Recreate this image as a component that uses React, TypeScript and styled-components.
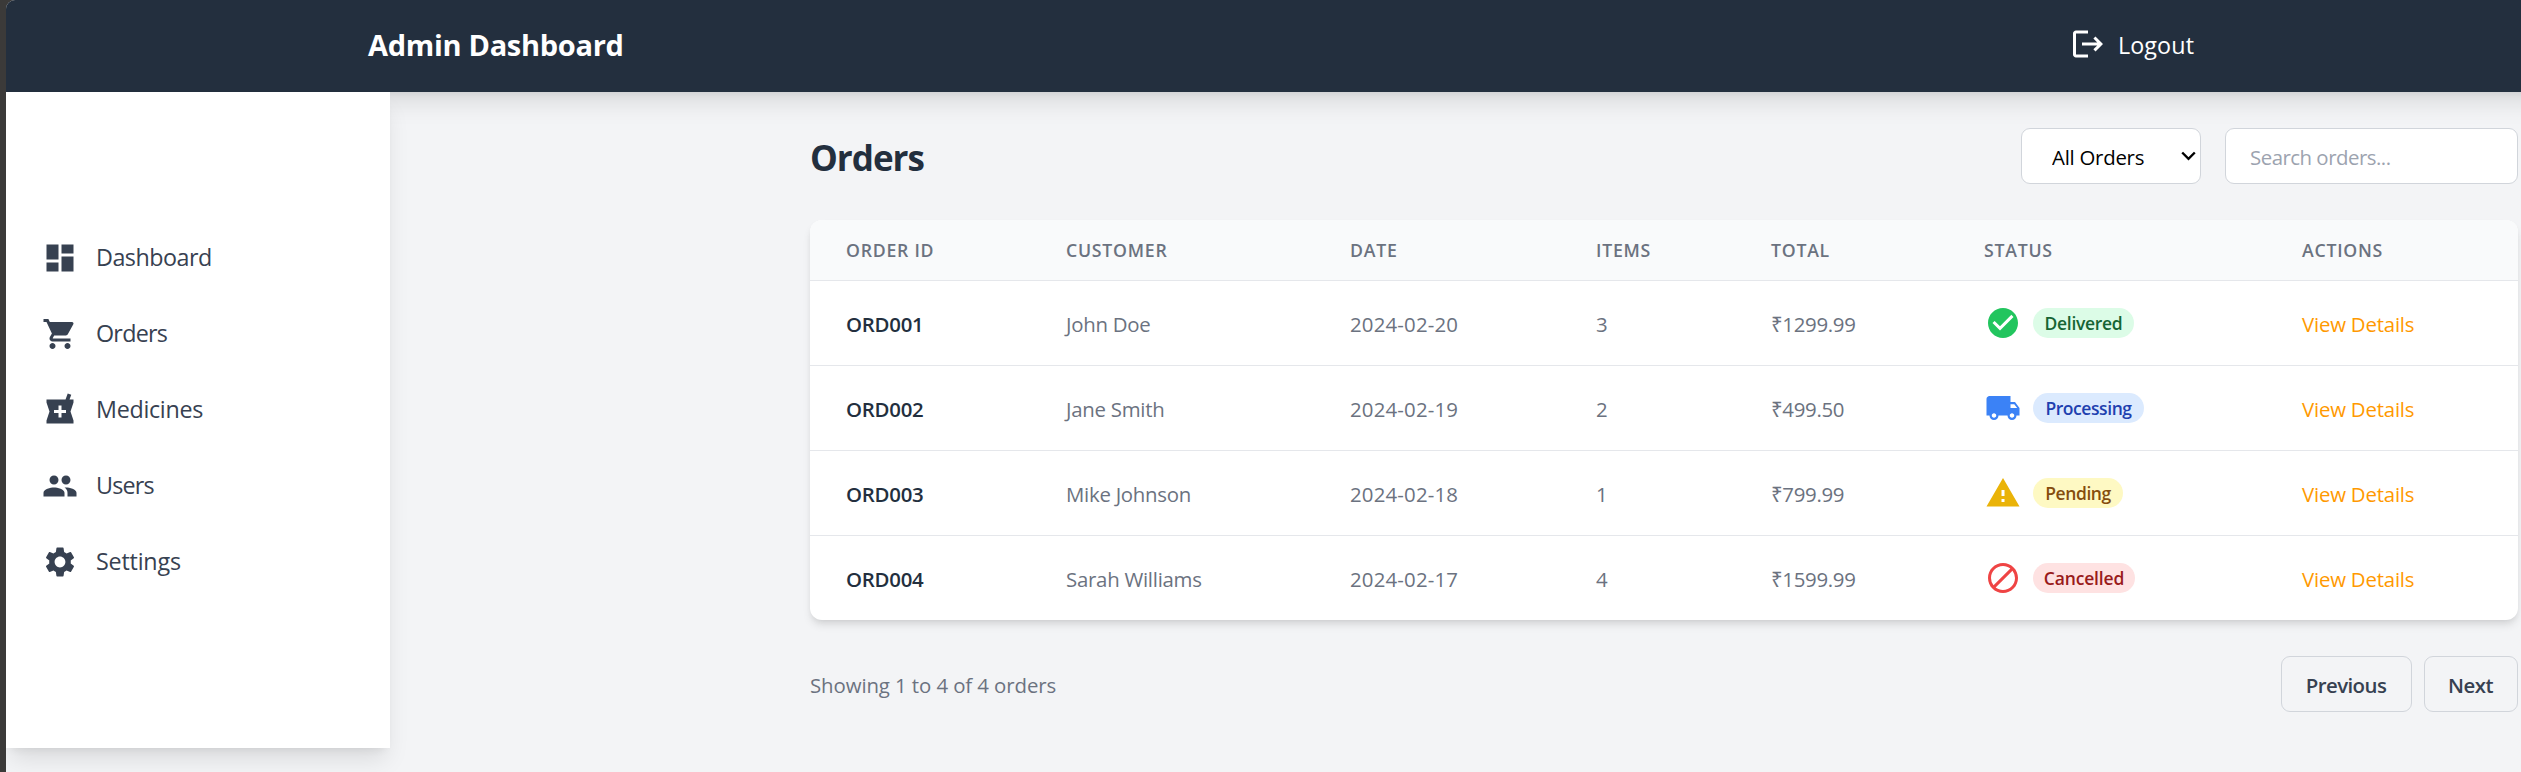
import React from 'react';
import styled, { createGlobalStyle } from 'styled-components';
import {
  MdBlock,
  MdCheckCircle,
  MdDashboard,
  MdLocalPharmacy,
  MdLocalShipping,
  MdLogout,
  MdPeople,
  MdSettings,
  MdShoppingCart,
  MdWarning,
} from 'react-icons/md';

const GlobalStyle = createGlobalStyle`
  *, *::before, *::after { box-sizing: border-box; }
  body {
    margin: 0;
    overflow: hidden;
    background: #3b3a39;
    font-family: 'Segoe UI', 'Open Sans', 'Noto Sans', sans-serif;
    font-size: 20.4px;
    color: #374151;
  }
  h1, h2 { margin: 0; }
  button, input, select { font: inherit; }
`;

const Window = styled.div`
  display: flex;
  flex-direction: column;
  height: 772px;
  margin-left: 6px;
  overflow: hidden;
  background: #f3f4f6;
  border-top-left-radius: 9px;
`;

const Header = styled.header`
  display: flex;
  align-items: center;
  flex: 0 0 92px;
  margin-right: -36px;
  padding: 0 0 4px 362px;
  background: #232f3e;
  color: #fff;
  box-shadow: 0 15px 22.5px -4.5px rgba(0, 0, 0, 0.1), 0 6px 9px -6px rgba(0, 0, 0, 0.1);
`;

const Brand = styled.h1`
  flex: 0 0 1702px;
  padding-top: 1px;
  font-size: 29px;
  line-height: 42px;
  letter-spacing: -0.3px;
`;

const LogoutButton = styled.button`
  display: flex;
  align-items: center;
  gap: 12px;
  padding: 0;
  border: 0;
  background: none;
  color: inherit;
  font-size: 23.3px;
  line-height: 36px;
  letter-spacing: 0.1px;
`;

const LogoutLabel = styled.span`
  padding-top: 2px;
`;

const Body = styled.div`
  display: flex;
  align-items: flex-start;
`;

const Sidebar = styled.nav`
  position: relative;
  flex: 0 0 384px;
  height: 656px;
  padding: 128px 36px 0;
  background: #fff;
  box-shadow: 0 15px 22.5px -4.5px rgba(0, 0, 0, 0.1), 0 6px 9px -6px rgba(0, 0, 0, 0.1);
`;

const NavItem = styled.a`
  display: flex;
  align-items: center;
  gap: 18px;
  height: 76px;
`;

const NavLabel = styled.span<{ $tracking: number }>`
  padding-bottom: 3px;
  font-size: 23.3px;
  line-height: 36px;
  letter-spacing: ${(p) => p.$tracking}px;
`;

const Main = styled.main`
  width: 1708px;
  margin-left: 420px;
  padding-top: 36px;
`;

const Toolbar = styled.div`
  display: flex;
  align-items: center;
  justify-content: space-between;
  height: 56px;
`;

const PageTitle = styled.h2`
  padding-top: 4px;
  color: #232f3e;
  font-size: 35px;
  line-height: 48px;
  letter-spacing: -1px;
`;

const Filters = styled.div`
  display: flex;
  gap: 24px;
`;

const SelectBox = styled.div`
  display: grid;
  align-items: center;
  width: 180px;
  height: 56px;
  > * { grid-area: 1 / 1; }
`;

const StatusSelect = styled.select`
  width: 100%;
  height: 100%;
  padding: 1px 30px 0;
  appearance: none;
  border: 1px solid #d1d5db;
  border-radius: 9px;
  background: #fff;
  color: #000;
  letter-spacing: -0.25px;
`;

const Chevron = styled.svg`
  justify-self: end;
  margin-right: 5px;
  pointer-events: none;
`;

const SearchInput = styled.input`
  width: 293px;
  height: 56px;
  padding: 1px 24px 0;
  border: 1px solid #d1d5db;
  border-radius: 9px;
  background: #fff;
  letter-spacing: -0.5px;
  &::placeholder { color: #9ca3af; opacity: 1; }
`;

const Card = styled.div`
  height: 400px;
  margin: 36px 0;
  overflow: hidden;
  border-radius: 12px;
  background: #fff;
  box-shadow: 0 6px 9px -1.5px rgba(0, 0, 0, 0.1), 0 3px 6px -3px rgba(0, 0, 0, 0.1);
`;

const Row = styled.div`
  display: grid;
  grid-template-columns: 220px 284px 246px 175px 213px 318px 252px;
  align-items: center;
  height: 85px;
  border-top: 1px solid #e5e7eb;
`;

const HeadRow = styled(Row)`
  height: 60px;
  border-top: 0;
  background: #f9fafb;
`;

const HeadCell = styled.div`
  padding-left: 36px;
  color: #6b7280;
  font-size: 17.7px;
  font-weight: 600;
  line-height: 24px;
  letter-spacing: 0.75px;
`;

const Cell = styled.div<{ $tracking?: number }>`
  padding: 1px 0 0 36px;
  color: #6b7280;
  line-height: 30px;
  letter-spacing: ${(p) => p.$tracking ?? -0.26}px;
  white-space: nowrap;
`;

const IdCell = styled(Cell)`
  color: #232f3e;
  font-weight: 600;
`;

const DetailsLink = styled.a`
  color: #ff9900;
`;

const StatusCell = styled.div<{ $icon: string }>`
  display: flex;
  align-items: center;
  gap: 12px;
  padding-left: 37px;
  color: ${(p) => p.$icon};
`;

const Badge = styled.span<{ $bg: string; $fg: string; $tracking: number; $width: number }>`
  width: ${(p) => p.$width}px;
  height: 30px;
  border-radius: 15px;
  background: ${(p) => p.$bg};
  color: ${(p) => p.$fg};
  font-size: 17.5px;
  font-weight: 600;
  line-height: 30px;
  letter-spacing: ${(p) => p.$tracking}px;
  text-align: center;
`;

const Footer = styled.footer`
  display: flex;
  align-items: center;
  justify-content: space-between;
  color: #6b7280;
`;

const Summary = styled.p`
  margin: 0;
  padding-top: 2px;
  letter-spacing: -0.09px;
`;

const Pager = styled.div`
  display: flex;
  gap: 12px;
`;

const PageButton = styled.button<{ $width: number }>`
  width: ${(p) => p.$width}px;
  height: 56px;
  padding: 1px 1px 0 0;
  border: 1px solid #d1d5db;
  border-radius: 9px;
  background: none;
  color: #374151;
  font-weight: 600;
  letter-spacing: -0.55px;
`;

const NAV = [
  { label: 'Dashboard', Icon: MdDashboard, tracking: -0.5 },
  { label: 'Orders', Icon: MdShoppingCart, tracking: -0.75 },
  { label: 'Medicines', Icon: MdLocalPharmacy, tracking: -0.3 },
  { label: 'Users', Icon: MdPeople, tracking: -0.8 },
  { label: 'Settings', Icon: MdSettings, tracking: -0.2 },
];

const COLUMNS = ['ORDER ID', 'CUSTOMER', 'DATE', 'ITEMS', 'TOTAL', 'STATUS', 'ACTIONS'];

const STATUS = {
  Delivered: { Icon: MdCheckCircle, icon: '#22c55e', bg: '#dcfce7', fg: '#166534', width: 101, tracking: -0.3 },
  Processing: { Icon: MdLocalShipping, icon: '#3b82f6', bg: '#dbeafe', fg: '#1e40af', width: 111, tracking: -0.43 },
  Pending: { Icon: MdWarning, icon: '#eab308', bg: '#fef9c3', fg: '#854d0e', width: 90, tracking: -0.4 },
  Cancelled: { Icon: MdBlock, icon: '#ef4444', bg: '#fee2e2', fg: '#991b1b', width: 102, tracking: -0.15 },
};

const ORDERS: { id: string; customer: string; date: string; items: number; total: string; status: keyof typeof STATUS }[] = [
  { id: 'ORD001', customer: 'John Doe', date: '2024-02-20', items: 3, total: '₹1299.99', status: 'Delivered' },
  { id: 'ORD002', customer: 'Jane Smith', date: '2024-02-19', items: 2, total: '₹499.50', status: 'Processing' },
  { id: 'ORD003', customer: 'Mike Johnson', date: '2024-02-18', items: 1, total: '₹799.99', status: 'Pending' },
  { id: 'ORD004', customer: 'Sarah Williams', date: '2024-02-17', items: 4, total: '₹1599.99', status: 'Cancelled' },
];

function OrderRow({ order }: { order: (typeof ORDERS)[number] }) {
  const s = STATUS[order.status];
  return (
    <Row>
      <IdCell $tracking={-0.25}>{order.id}</IdCell>
      <Cell>{order.customer}</Cell>
      <Cell $tracking={0.18}>{order.date}</Cell>
      <Cell>{order.items}</Cell>
      <Cell $tracking={-0.3}>{order.total}</Cell>
      <StatusCell $icon={s.icon}>
        <s.Icon size={36} />
        <Badge $bg={s.bg} $fg={s.fg} $tracking={s.tracking} $width={s.width}>
          {order.status}
        </Badge>
      </StatusCell>
      <Cell $tracking={-0.2}>
        <DetailsLink>View Details</DetailsLink>
      </Cell>
    </Row>
  );
}

export default function App() {
  return (
    <>
      <GlobalStyle />
      <Window>
        <Header>
          <Brand>Admin Dashboard</Brand>
          <LogoutButton>
            <MdLogout size={36} />
            <LogoutLabel>Logout</LogoutLabel>
          </LogoutButton>
        </Header>
        <Body>
          <Sidebar>
            {NAV.map(({ label, Icon, tracking }) => (
              <NavItem key={label}>
                <Icon size={36} />
                <NavLabel $tracking={tracking}>{label}</NavLabel>
              </NavItem>
            ))}
          </Sidebar>
          <Main>
            <Toolbar>
              <PageTitle>Orders</PageTitle>
              <Filters>
                <SelectBox>
                  <StatusSelect>
                    <option>All Orders</option>
                  </StatusSelect>
                  <Chevron width="15" height="10" viewBox="0 0 15 10" fill="none" stroke="#000" strokeWidth="2.4">
                    <path d="M1.2 1.5 7.5 7.8l6.3-6.3" />
                  </Chevron>
                </SelectBox>
                <SearchInput placeholder="Search orders..." />
              </Filters>
            </Toolbar>
            <Card>
              <HeadRow>
                {COLUMNS.map((c) => (
                  <HeadCell key={c}>{c}</HeadCell>
                ))}
              </HeadRow>
              {ORDERS.map((o) => (
                <OrderRow key={o.id} order={o} />
              ))}
            </Card>
            <Footer>
              <Summary>Showing 1 to 4 of 4 orders</Summary>
              <Pager>
                <PageButton $width={131}>Previous</PageButton>
                <PageButton $width={94}>Next</PageButton>
              </Pager>
            </Footer>
          </Main>
        </Body>
      </Window>
    </>
  );
}
